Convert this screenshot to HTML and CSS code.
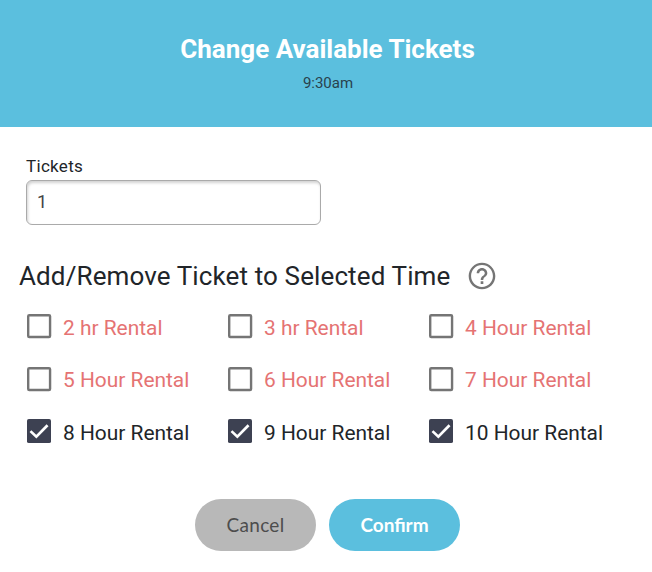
FILE: index.html
```
<!DOCTYPE html>
<html lang="en">

    <head>
        <meta charset="UTF-8">
        <meta name="viewport" content="width=device-width, initial-scale=1.0">

        <title>Change Available Tickets</title>

        <link rel="stylesheet" href="styles.css">
    </head>

    <body>

        <!-- checkbox shapes, used by every option below -->
        <svg class="icon-defs">
            <symbol id="box-off" viewBox="0 0 24 24">
                <rect class="outline" x="3.9" y="3.9" width="16.4" height="16.4" rx="0.8"/>
            </symbol>
            <symbol id="box-on" viewBox="0 0 24 24">
                <rect x="3" y="3" width="18" height="18" rx="1.4"/>
                <path class="tick" d="M5.6 12.1L10 16.3L18.4 7.7"/>
            </symbol>
        </svg>

        <header class="header">
            <h1 class="title">Change Available Tickets</h1>
            <p class="time">9:30am</p>
        </header>

        <main class="content">

            <label class="tickets-label" for="tickets">Tickets</label>
            <input class="tickets-input" id="tickets" type="text" value="1">

            <div class="section-row">
                <h2 class="section-title">Add/Remove Ticket to Selected Time</h2>
                <svg class="help-icon" viewBox="0 0 24 24">
                    <path d="M11 18h2v-2h-2v2zm1-16C6.48 2 2 6.48 2 12s4.48 10 10 10 10-4.48 10-10S17.52 2 12 2zm0 18.2c-4.52 0-8.2-3.68-8.2-8.2S7.48 3.8 12 3.8s8.2 3.68 8.2 8.2-3.68 8.2-8.2 8.2zM12 6c-2.21 0-4 1.79-4 4h1.9c0-1.15.95-2.1 2.1-2.1s2.1.95 2.1 2.1c0 2-3.05 1.75-3.05 5h1.9c0-2.25 3.05-2.5 3.05-5 0-2.21-1.79-4-4-4z"/>
                </svg>
            </div>

            <div class="options">
                <div class="option"><svg class="box"><use href="#box-off"/></svg><span>2 hr Rental</span></div>
                <div class="option"><svg class="box"><use href="#box-off"/></svg><span>3 hr Rental</span></div>
                <div class="option"><svg class="box"><use href="#box-off"/></svg><span>4 Hour Rental</span></div>

                <div class="option"><svg class="box"><use href="#box-off"/></svg><span>5 Hour Rental</span></div>
                <div class="option"><svg class="box"><use href="#box-off"/></svg><span>6 Hour Rental</span></div>
                <div class="option"><svg class="box"><use href="#box-off"/></svg><span>7 Hour Rental</span></div>

                <div class="option checked"><svg class="box"><use href="#box-on"/></svg><span>8 Hour Rental</span></div>
                <div class="option checked"><svg class="box"><use href="#box-on"/></svg><span>9 Hour Rental</span></div>
                <div class="option checked"><svg class="box"><use href="#box-on"/></svg><span>10 Hour Rental</span></div>
            </div>

            <div class="buttons">
                <button class="button cancel">Cancel</button>
                <button class="button confirm">Confirm</button>
            </div>

        </main>

    </body>

</html>
```
FILE: styles.css
```
*
{
    box-sizing: border-box;
}

body
{
    margin: 0;
    background-color: white;
    color: #212529;
    font-family: Roboto, sans-serif;
}

.icon-defs
{
    display: none;
}

.header
{
    height: 127px;
    padding-top: 33px;
    background-color: #5bbfde;
    text-align: center;
}

.title
{
    margin: 0;
    padding-left: 3px;
    color: white;
    font-size: 26px;
    font-weight: bold;
    line-height: 32px;
}

.time
{
    margin: 8px 0 0;
    padding-left: 4px;
    color: #29424d;
    font-size: 15px;
    line-height: 20px;
}

.content
{
    padding: 29px 19px 0;
}

.tickets-label
{
    display: block;
    margin-left: 7px;
    font-size: 17px;
    line-height: 20px;
    letter-spacing: 0.3px;
}

.tickets-input
{
    display: block;
    width: 295px;
    height: 45px;
    margin: 4px 0 0 7px;
    padding: 0 11px 2px 10px;
    border: 1px solid #aaa;
    border-radius: 6px;
    box-shadow: inset 1px 2px 3px rgba(0, 0, 0, 0.18);
    color: #444;
    font-family: Roboto, sans-serif;
    font-size: 18px;
}

.section-row
{
    display: flex;
    align-items: center;
    height: 32px;
    margin-top: 35px;
}

.section-title
{
    margin: 0;
    font-size: 26px;
    font-weight: normal;
    letter-spacing: 0.12px;
    white-space: nowrap;
}

.help-icon
{
    width: 32px;
    height: 32px;
    margin: 0 0 1px 16px;
    fill: #757575;
}

.options
{
    display: grid;
    grid-template-columns: repeat(3, 201px);
    grid-auto-rows: 52.5px;
    margin: 8px 0 0 4px;
}

.option
{
    display: flex;
    align-items: center;
    gap: 8px;
    color: #e57373;
    font-size: 20.9px;
    white-space: nowrap;
}

.option span
{
    padding-top: 3px;
}

.checked
{
    color: #212529;
}

.box
{
    width: 32px;
    height: 32px;
    fill: #757575;
}

.checked .box
{
    fill: #3d4152;
}

.outline
{
    fill: none;
    stroke: #757575;
    stroke-width: 1.8;
}

.tick
{
    fill: none;
    stroke: white;
    stroke-width: 2;
}

.buttons
{
    display: flex;
    gap: 13px;
    margin: 41px 0 0 176px;
}

.button
{
    height: 52px;
    padding: 0;
    border: none;
    border-radius: 26px;
    font-family: Lato, sans-serif;
    font-size: 19px;
}

.cancel
{
    width: 121px;
    background-color: #b8b8b8;
    color: #4d4d4d;
    letter-spacing: 0.3px;
}

.confirm
{
    width: 131px;
    background-color: #5bbfde;
    color: white;
    font-weight: bold;
}
```
